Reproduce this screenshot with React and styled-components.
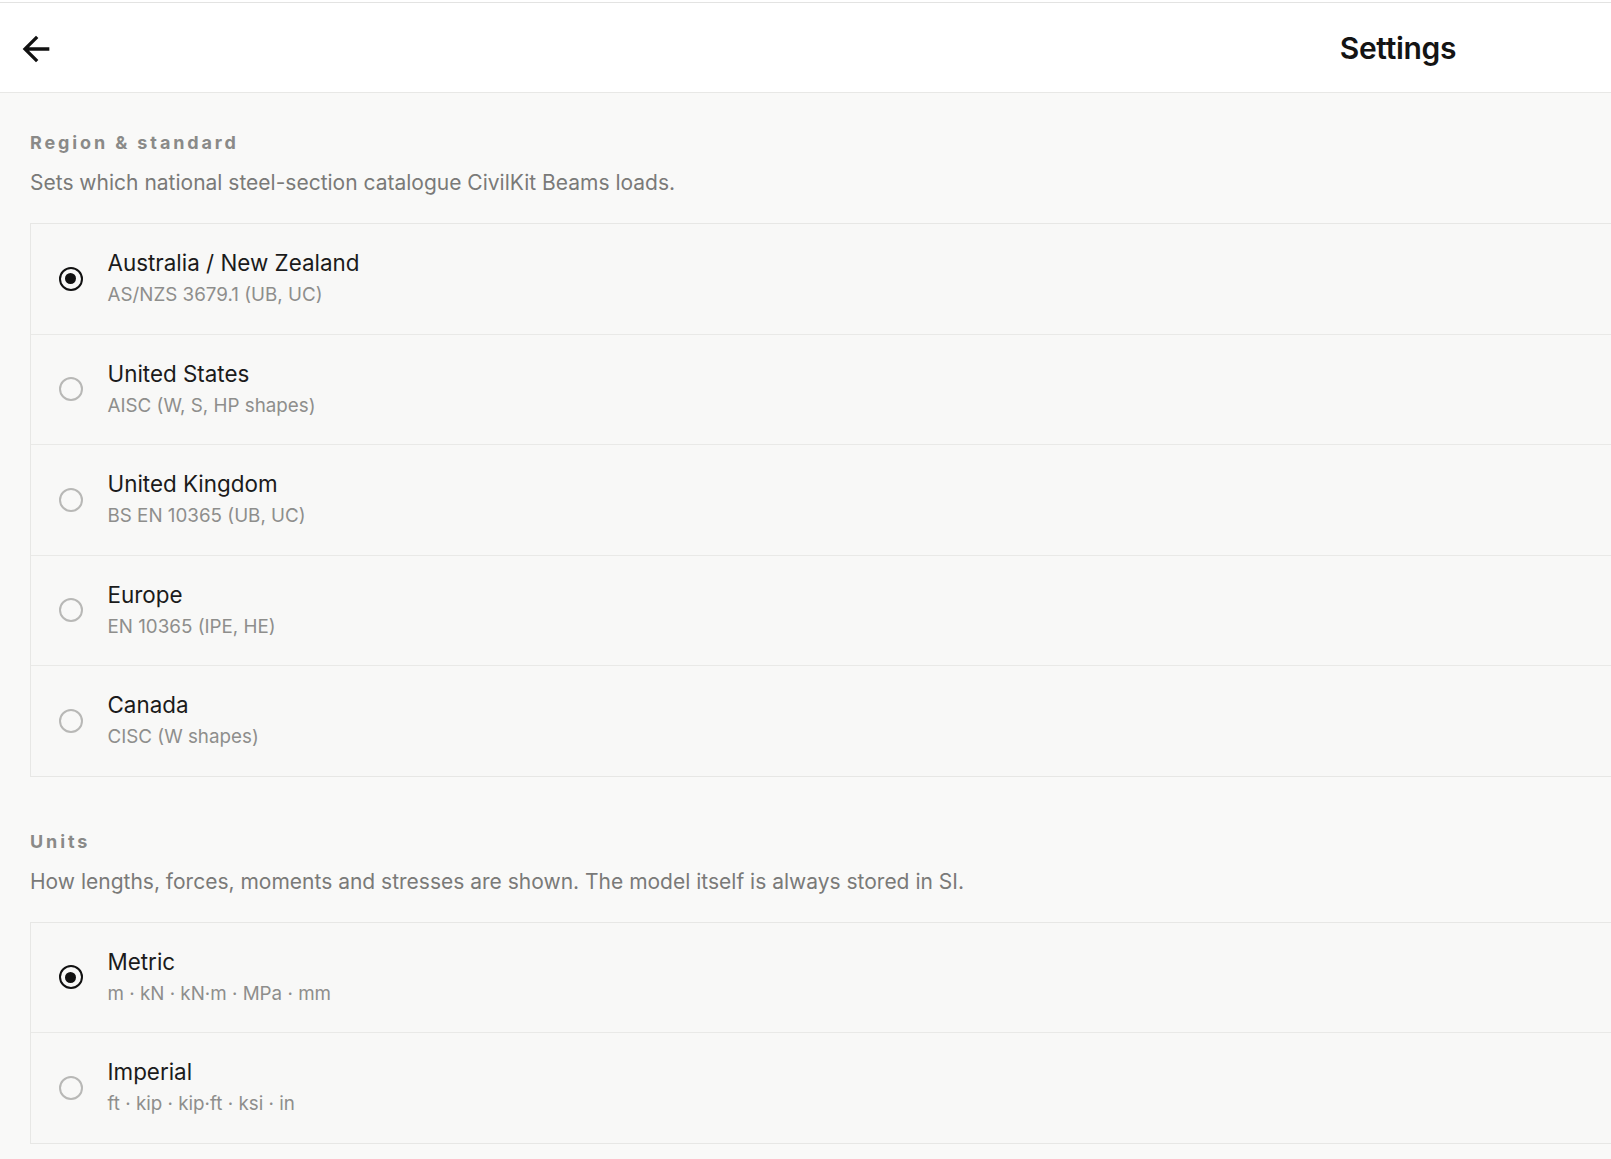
import React from 'react';
import styled, { createGlobalStyle } from 'styled-components';
import { MdArrowBack } from 'react-icons/md';

const GlobalStyle = createGlobalStyle`
  html, body {
    margin: 0;
    padding: 0;
    background: #f9f9f8;
    overflow: hidden;
  }
  body {
    font-family: Inter, 'Noto Sans', sans-serif;
    -webkit-font-smoothing: antialiased;
  }
`;

const Page = styled.div`
  width: 2796px;
  box-sizing: border-box;
  padding-top: 2px;
  background: #ffffff;
`;

const Header = styled.header`
  height: 89px;
  box-sizing: content-box;
  background: #ffffff;
  border-top: 1.5px solid #e3e3e2;
  border-bottom: 1.5px solid #e8e8e6;
  display: grid;
  grid-template-columns: 1fr auto 1fr;
  align-items: center;
`;

const BackButton = styled.button`
  justify-self: start;
  margin-left: 16px;
  margin-top: 2px;
  width: 40px;
  height: 40px;
  padding: 0;
  border: none;
  background: transparent;
  color: #111;
  display: flex;
  align-items: center;
  justify-content: center;
  cursor: pointer;
`;

const Title = styled.h1`
  margin: 1px 0 0;
  font-size: 30px;
  font-weight: 600;
  color: #141414;
  letter-spacing: -0.01em;
`;

const Content = styled.main`
  background: #f9f9f8;
  padding: 38px 30px 40px 30px;
  display: flex;
  flex-direction: column;
  gap: 53px;
`;

const Section = styled.section`
  display: flex;
  flex-direction: column;
`;

const SectionLabel = styled.h2`
  margin: 0;
  font-size: 18px;
  line-height: 24px;
  font-weight: 700;
  letter-spacing: 0.16em;
  color: #8a8a88;
`;

const SectionText = styled.p`
  margin: 14px 0 0;
  font-size: 21px;
  line-height: 28px;
  color: #7a7a78;
`;

const Card = styled.div`
  margin-top: 26px;
  border: 1.5px solid #e7e7e5;
  background: #f8f8f7;
`;

const Row = styled.label`
  height: 109.5px;
  box-sizing: content-box;
  display: flex;
  align-items: center;
  gap: 25px;
  padding-left: 27.5px;
  cursor: pointer;

  & + & {
    border-top: 1.5px solid #e9e9e7;
  }
`;

const Radio = styled.span`
  width: 24px;
  height: 24px;
  box-sizing: border-box;
  border-radius: 50%;
  border: 2.4px solid ${(p) => (p.$checked ? '#111111' : '#b8b8b6')};
  display: flex;
  align-items: center;
  justify-content: center;
  flex-shrink: 0;

  &::after {
    content: '';
    width: 11px;
    height: 11px;
    border-radius: 50%;
    background: #111111;
    display: ${(p) => (p.$checked ? 'block' : 'none')};
  }
`;

const OptionText = styled.span`
  display: flex;
  flex-direction: column;
  gap: 5px;
`;

const OptionTitle = styled.span`
  font-size: 22.4px;
  line-height: 28px;
  color: #1b1b1b;
`;

const OptionSub = styled.span`
  font-size: 18.8px;
  line-height: 26px;
  color: #8e8e8c;
`;

const regions = [
  { title: 'Australia / New Zealand', sub: 'AS/NZS 3679.1 (UB, UC)', checked: true },
  { title: 'United States', sub: 'AISC (W, S, HP shapes)' },
  { title: 'United Kingdom', sub: 'BS EN 10365 (UB, UC)' },
  { title: 'Europe', sub: 'EN 10365 (IPE, HE)' },
  { title: 'Canada', sub: 'CISC (W shapes)' },
];

const units = [
  { title: 'Metric', sub: 'm · kN · kN·m · MPa · mm', checked: true },
  { title: 'Imperial', sub: 'ft · kip · kip·ft · ksi · in' },
];

const OptionList = ({ options }) => (
  <Card>
    {options.map((o) => (
      <Row key={o.title}>
        <Radio $checked={!!o.checked} />
        <OptionText>
          <OptionTitle>{o.title}</OptionTitle>
          <OptionSub>{o.sub}</OptionSub>
        </OptionText>
      </Row>
    ))}
  </Card>
);

const App = () => {
  return (
    <Page>
      <GlobalStyle />
      <Header>
        <BackButton aria-label="Back">
          <MdArrowBack size={40} />
        </BackButton>
        <Title>Settings</Title>
        <span />
      </Header>
      <Content>
        <Section>
          <SectionLabel>Region &amp; standard</SectionLabel>
          <SectionText>Sets which national steel-section catalogue CivilKit Beams loads.</SectionText>
          <OptionList options={regions} />
        </Section>
        <Section>
          <SectionLabel>Units</SectionLabel>
          <SectionText>
            How lengths, forces, moments and stresses are shown. The model itself is always stored in SI.
          </SectionText>
          <OptionList options={units} />
        </Section>
      </Content>
    </Page>
  );
};

export default App;
